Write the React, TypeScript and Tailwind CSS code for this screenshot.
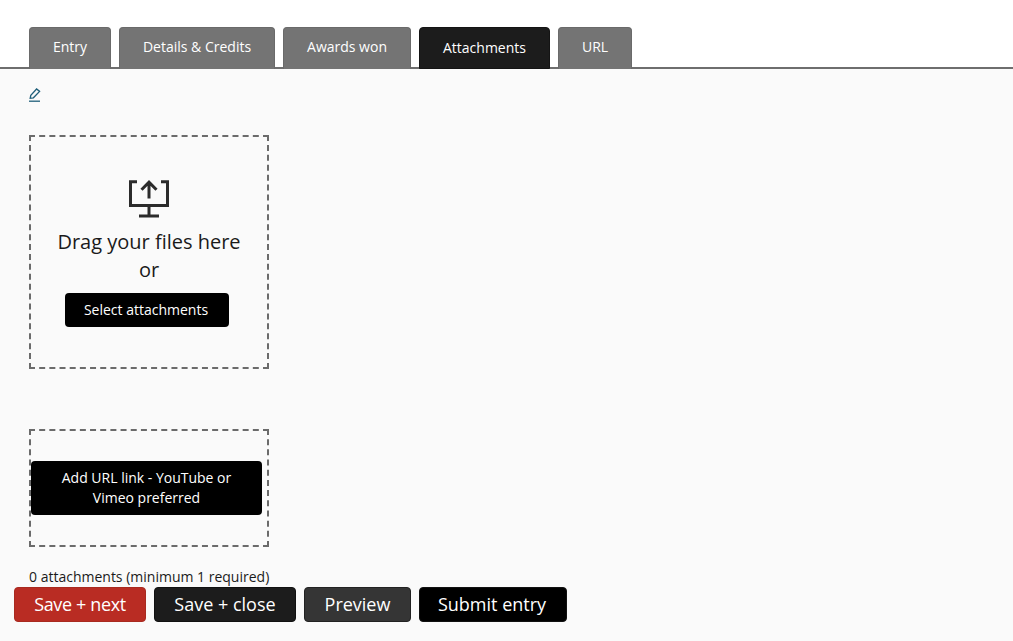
import React from 'react';

const tabs = [
  { label: 'Entry', width: 'w-[82px]', active: false },
  { label: 'Details & Credits', width: 'w-[156px]', active: false },
  { label: 'Awards won', width: 'w-[128px]', active: false },
  { label: 'Attachments', width: 'w-[131px]', active: true },
  { label: 'URL', width: 'w-[74px]', active: false },
];

const UploadIcon = () => (
  <svg width="40" height="38" viewBox="0 0 40 38" fill="none" stroke="#2b2b2b" strokeWidth="3" className="block">
    <path d="M8 1.8H1.5V25.5H38.5V1.8H32" />
    <path d="M20 25.5V35M10 36H30" />
    <path d="M20 18.5V2.5M12.5 9.8L20 2.2L27.5 9.8" />
  </svg>
);

const PencilIcon = () => (
  <svg width="12" height="14" viewBox="0 0 12 14" fill="none" stroke="#1f5f7a" strokeWidth="1.3" className="block">
    <path d="M1.2 10.2L1.8 7.4L7.6 1L10.6 3.4L4.4 9.8Z" />
    <path d="M0 13.2H11" />
  </svg>
);

export default function App() {
  return (
    <div className="min-h-screen flex flex-col bg-[#fafafa] font-['Open_Sans',sans-serif] text-[#1a1a1a]">
      <div className="bg-white pt-[27px] pl-[29px] flex gap-2 border-b-2 border-[#6e6e6e] h-[69px]">
        {tabs.map((tab) => (
          <div
            key={tab.label}
            className={`${tab.width} h-[42px] rounded-t-[4px] border text-[14px] flex items-center justify-center text-white ${
              tab.active ? 'bg-[#1c1c1c] border-[#141414] pb-[2px]' : 'bg-[#747474] border-[#6a6a6a] border-b-0 pb-[4px]'
            }`}
          >
            {tab.label}
          </div>
        ))}
      </div>

      <div className="pl-[29px] pt-[19px] h-[33px]">
        <PencilIcon />
      </div>

      <div className="ml-[29px] mt-[33px] w-[240px] h-[234px] border-2 border-dashed border-[#6b6b6b] flex flex-col items-center pt-[43px]">
        <UploadIcon />
        <div className="mt-[10px] text-[20px] leading-[28px]">Drag your files here</div>
        <div className="text-[20px] leading-[28px]">or</div>
        <button className="mt-[9px] mr-[4px] w-[164px] h-[34px] pr-[2px] pb-[2px] rounded-[4px] bg-black text-white text-[14px]">
          Select attachments
        </button>
      </div>

      <div className="ml-[29px] mt-[60px] w-[240px] h-[118px] border-2 border-dashed border-[#6b6b6b] flex flex-col pt-[30px]">
        <button className="w-[231px] h-[54px] rounded-[4px] bg-black text-white text-[14px] leading-[20px] px-6">
          Add URL link - YouTube or Vimeo preferred
        </button>
      </div>

      <div className="ml-[29px] mt-[20px] text-[14px] leading-[20px]">0 attachments (minimum 1 required)</div>

      <div className="ml-[14px] flex gap-2">
        <button className="w-[132px] h-[35px] rounded-[4px] border border-[#a82a20] bg-[#b92c23] text-white text-[18px] tracking-[-0.35px]">
          Save + next
        </button>
        <button className="w-[142px] h-[35px] rounded-[4px] border border-[#111111] bg-[#1c1c1c] text-white text-[18px]">
          Save + close
        </button>
        <button className="w-[107px] h-[35px] rounded-[4px] border border-[#222222] bg-[#353535] text-white text-[18px]">
          Preview
        </button>
        <button className="w-[148px] h-[35px] pr-[2px] rounded-[4px] border border-[#111111] bg-black text-white text-[18px]">
          Submit entry
        </button>
      </div>
    </div>
  );
}
